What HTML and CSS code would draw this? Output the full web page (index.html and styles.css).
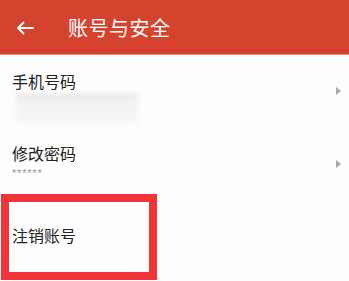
FILE: index.html
```html
<!DOCTYPE html>
<html lang="zh">
<head>
<meta charset="utf-8">
<link rel="stylesheet" href="styles.css">
</head>
<body>
<div class="app">
  <header class="bar">
    <svg class="back" width="18" height="14" viewBox="0 0 18 14"><path d="M17 7H2M7.5 1.5L2 7l5.5 5.5" fill="none" stroke="#fff" stroke-width="2" stroke-linecap="round" stroke-linejoin="round"/></svg>
    <span class="title">账号与安全</span>
  </header>
  <div class="row row-phone">
    <div class="texts">
      <div class="label">手机号码</div>
      <div class="blur"></div>
    </div>
    <span class="tri"></span>
  </div>
  <div class="row row-pwd">
    <div class="texts">
      <div class="label">修改密码</div>
      <div class="stars">******</div>
    </div>
    <span class="tri"></span>
  </div>
  <div class="row row-cancel">
    <div class="label">注销账号</div>
    <div class="mark"></div>
  </div>
</div>
</body>
</html>
```
FILE: styles.css
```css
html, body { margin: 0; padding: 0; }
body { background: #fdfdfd; font-family: "Noto Sans CJK SC", "Noto Sans", sans-serif; width: 349px; height: 281px; overflow: hidden; }
.app { display: flex; flex-direction: column; }
.bar { height: 54px; flex: none; background: #d5432e; border-bottom: 1px solid #e88a7b; display: flex; align-items: center; color: #fff; }
.back { margin-left: 16px; margin-top: 2px; }
.title { margin-left: 34px; font-size: 20px; letter-spacing: 0.5px; margin-top: 1px; }
.row { display: flex; flex: none; align-items: flex-start; justify-content: space-between; padding: 0 8px 0 12px; position: relative; }
.label { font-size: 16px; color: #222; line-height: 20px; }
.row-phone { height: 70px; }
.row-phone .label { margin-top: 16px; }
.blur { margin-top: 2px; margin-left: 4px; width: 122px; height: 30px; background: linear-gradient(180deg, #ebebeb 0%, #f3f3f3 40%, #f6f6f6 100%); filter: blur(2px); }
.tri { width: 0; height: 0; border-left: 5px solid #a8a8a8; border-top: 4px solid transparent; border-bottom: 4px solid transparent; }
.row-phone .tri { margin-top: 32px; }
.row-pwd { height: 71px; }
.row-pwd .label { margin-top: 18px; }
.row-pwd .tri { margin-top: 35px; }
.stars { font-family: "Liberation Sans", sans-serif; font-size: 11px; color: #999; line-height: 12px; margin-top: 4px; letter-spacing: 0.8px; }
.row-cancel { height: 85px; }
.row-cancel .label { margin-top: 29px; }
.mark { position: absolute; left: 1px; top: -2px; width: 140px; height: 70px; border: 8px solid #f0343a; }
```
